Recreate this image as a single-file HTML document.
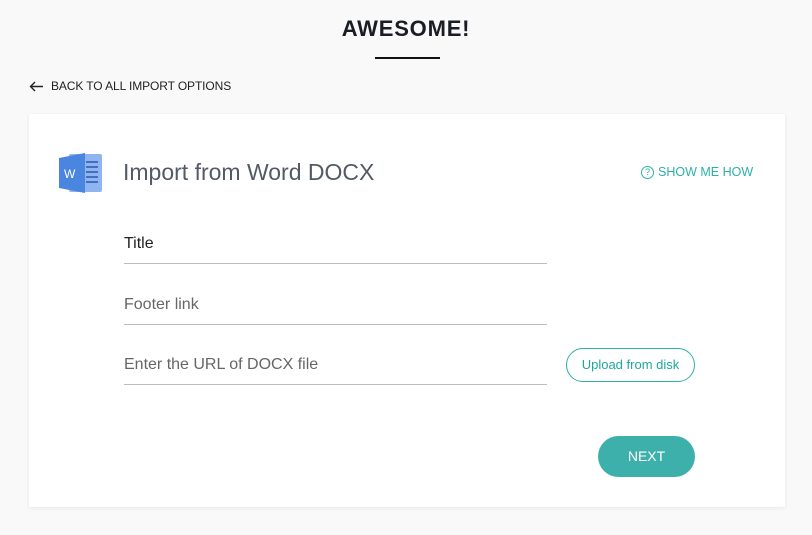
<!DOCTYPE html>
<html><head><meta charset="utf-8"><style>
*{margin:0;padding:0;box-sizing:border-box}
body{width:812px;height:535px;background:#f9f9f9;font-family:"Liberation Sans",sans-serif;position:relative;overflow:hidden}
.abs{position:absolute}
h1{position:absolute;left:0;width:812px;top:16px;text-align:center;font-size:22px;font-weight:bold;letter-spacing:0.8px;color:#1a1d24}
.bar{left:375px;top:57px;width:65px;height:2px;background:#111}
.back{left:29px;top:79px;font-size:12px;color:#222;letter-spacing:-0.1px}
.card{left:29px;top:114px;width:756px;height:393px;background:#fff;box-shadow:0 1px 4px rgba(0,0,0,.08)}
.title{left:123px;top:159px;font-size:23px;color:#535a66}
.how{left:641px;top:165px;font-size:12.5px;color:#2bb1a8}
.field{left:124px;width:423px;border-bottom:1px solid #bdbdbd;font-size:16px;color:#666;padding-bottom:10px}
.up{left:566px;top:348px;width:129px;height:34px;border:1px solid #2bb1a8;border-radius:17px;color:#1ea79e;font-size:13px;text-align:center;line-height:32px}
.next{left:598px;top:436px;width:97px;height:41px;border-radius:21px;background:#3db0ac;color:#fff;font-size:14px;text-align:center;line-height:41px}
</style></head><body>
<h1>AWESOME!</h1>
<div class="abs bar"></div>
<svg class="abs" style="left:29px;top:81px" width="15" height="11" viewBox="0 0 15 11"><path d="M14 5.5H1.5M6 1L1.5 5.5L6 10" stroke="#222" stroke-width="1.4" fill="none"/></svg>
<div class="abs back" style="left:51px">BACK TO ALL IMPORT OPTIONS</div>
<div class="abs card"></div>
<svg class="abs" style="left:59px;top:152px" width="44" height="42" viewBox="0 0 44 42">
<rect x="10" y="2" width="33" height="38" rx="2" fill="#8fb4f0"/>
<path d="M0 6 L26 1 L26 41 L0 36Z" fill="#4a86e0"/>
<g stroke="#2f5fb0" stroke-width="1.6"><line x1="27" y1="10" x2="39" y2="10"/><line x1="27" y1="15" x2="39" y2="15"/><line x1="27" y1="20" x2="39" y2="20"/><line x1="27" y1="25" x2="39" y2="25"/><line x1="27" y1="30" x2="39" y2="30"/></g>
<text x="5" y="26" font-family="Liberation Sans" font-size="12" fill="#fff">W</text>
</svg>
<div class="abs title">Import from Word DOCX</div>
<div class="abs how"><span style="display:inline-block;width:13px;height:13px;border:1px solid #2bb1a8;border-radius:50%;font-size:9px;text-align:center;line-height:11px;vertical-align:1px;margin-right:4px">?</span>SHOW ME HOW</div>
<div class="abs field" style="top:235px;color:#222">Title</div>
<div class="abs field" style="top:296px">Footer link</div>
<div class="abs field" style="top:356px">Enter the URL of DOCX file</div>
<div class="abs up">Upload from disk</div>
<div class="abs next">NEXT</div>
</body></html>
